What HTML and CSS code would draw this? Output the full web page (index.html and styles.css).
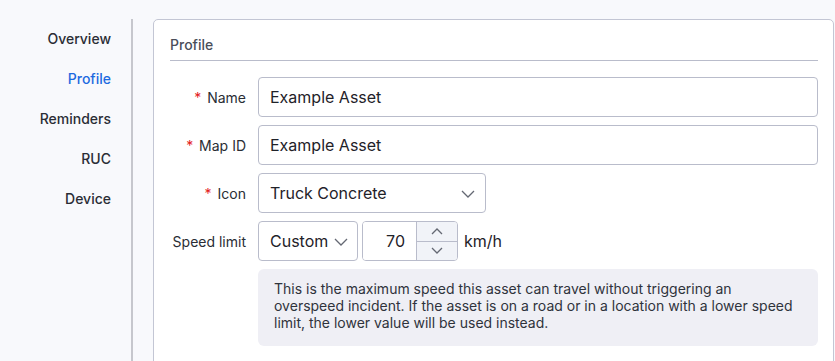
FILE: index.html
```html
<!doctype html>
<html lang="en">
<head>
    <meta charset="UTF-8">
    <title>Asset Profile</title>
    <link rel="stylesheet" href="styles.css">
</head>
<body>
    <div class="layout">
        <nav class="side-nav">
            <a class="nav-item">Overview</a>
            <a class="nav-item active">Profile</a>
            <a class="nav-item">Reminders</a>
            <a class="nav-item">RUC</a>
            <a class="nav-item">Device</a>
        </nav>

        <main class="card">
            <h2 class="card-title">Profile</h2>
            <div class="form-grid">
                <label class="field-label" for="assetName"><span class="req">*</span> Name</label>
                <input class="text-input" id="assetName" type="text" value="Example Asset">

                <label class="field-label" for="mapId"><span class="req">*</span> Map ID</label>
                <input class="text-input" id="mapId" type="text" value="Example Asset">

                <label class="field-label" for="assetIcon"><span class="req">*</span> Icon</label>
                <div class="select-wrap icon-select">
                    <select class="select-input" id="assetIcon">
                        <option>Truck Concrete</option>
                    </select>
                    <svg class="chevron" width="14" height="8" viewBox="0 0 14 8"><polyline points="1,1 7,7 13,1"/></svg>
                </div>

                <label class="field-label" for="speedMode">Speed limit</label>
                <div class="speed-row">
                    <div class="select-wrap mode-select">
                        <select class="select-input" id="speedMode">
                            <option>Custom</option>
                        </select>
                        <svg class="chevron" width="14" height="8" viewBox="0 0 14 8"><polyline points="1,1 7,7 13,1"/></svg>
                    </div>
                    <div class="number-input">
                        <input class="number-field" type="text" value="70">
                        <div class="spinner">
                            <button class="spin-btn"><svg width="12" height="7" viewBox="0 0 12 7"><polyline points="1,6 6,1 11,6"/></svg></button>
                            <button class="spin-btn"><svg width="12" height="7" viewBox="0 0 12 7"><polyline points="1,1 6,6 11,1"/></svg></button>
                        </div>
                    </div>
                    <span class="unit">km/h</span>
                </div>

                <div class="help-box">
                    This is the maximum speed this asset can travel without triggering an
                    overspeed incident. If the asset is on a road or in a location with a lower speed
                    limit, the lower value will be used instead.
                </div>
            </div>
        </main>
    </div>
</body>
</html>
```

FILE: styles.css
```css
body {
    margin: 0;
    font-family: 'Inter', 'Noto Sans', sans-serif;
    background-color: #f8f9fc;
    color: #2a2d35;
    overflow: hidden;
}
.layout {
    display: flex;
    padding-top: 19px;
}
.side-nav {
    box-sizing: border-box;
    width: 133px;
    flex-shrink: 0;
    padding-right: 20px;
    border-right: 2px solid #c6c7cd;
    display: flex;
    flex-direction: column;
    align-items: flex-end;
}
.nav-item {
    line-height: 40px;
    font-size: 14px;
    font-weight: 500;
    color: #2a2d35;
}
.nav-item.active {
    color: #1d6ae0;
}
.card {
    flex: 1;
    margin: 0 1px 0 20px;
    min-height: 420px;
    background-color: white;
    border: 1px solid #c3c6d4;
    border-radius: 5px;
    padding: 16px 15px 0 16px;
}
.card-title {
    margin: 0 0 16px;
    padding-bottom: 6px;
    font-size: 14px;
    line-height: 18px;
    font-weight: 500;
    color: #4a4e5a;
    border-bottom: 1px solid #b9bccb;
}
.form-grid {
    display: grid;
    grid-template-columns: 76px 1fr;
    column-gap: 12px;
    row-gap: 8px;
    align-items: center;
}
.field-label {
    text-align: right;
    font-size: 14px;
    color: #2a2d35;
    white-space: nowrap;
}
.req {
    color: #e3211c;
    margin-right: 2px;
}
.text-input,
.select-input,
.number-field {
    box-sizing: border-box;
    height: 40px;
    font-family: inherit;
    font-size: 16px;
    color: #1f2229;
    background-color: white;
    outline: none;
}
.text-input {
    width: 100%;
    border: 1px solid #b9bccb;
    border-radius: 4px;
    padding: 0 11px;
}
.select-wrap {
    position: relative;
}
.select-input {
    width: 100%;
    appearance: none;
    border: 1px solid #b9bccb;
    border-radius: 4px;
    padding: 0 11px;
}
.chevron {
    position: absolute;
    top: 17px;
    right: 11px;
    pointer-events: none;
}
.chevron polyline,
.spin-btn polyline {
    fill: none;
    stroke: #646873;
    stroke-width: 1.3;
}
.icon-select {
    width: 228px;
}
.speed-row {
    display: flex;
    align-items: center;
}
.mode-select {
    width: 100px;
}
.mode-select .chevron {
    right: 10px;
}
.number-input {
    display: flex;
    box-sizing: border-box;
    width: 96px;
    height: 40px;
    margin-left: 4px;
    border: 1px solid #b9bccb;
    border-radius: 4px;
    overflow: hidden;
}
.number-field {
    width: 53px;
    height: 38px;
    border: none;
    text-align: right;
    padding: 0 11px 0 0;
}
.spinner {
    flex: 1;
    display: flex;
    flex-direction: column;
    border-left: 1px solid #b9bccb;
    background-color: #f1f3f8;
}
.spin-btn {
    flex: 1;
    border: none;
    background: none;
    padding: 0;
    display: flex;
    align-items: center;
    justify-content: center;
}
.spin-btn + .spin-btn {
    border-top: 1px solid #b9bccb;
}
.unit {
    margin-left: 6px;
    font-size: 16px;
    color: #1f2229;
}
.help-box {
    grid-column: 2;
    background-color: #efeff5;
    border-radius: 6px;
    padding: 11px 24px 15px 16px;
    font-size: 14px;
    line-height: 17px;
    color: #2f333c;
}
```
